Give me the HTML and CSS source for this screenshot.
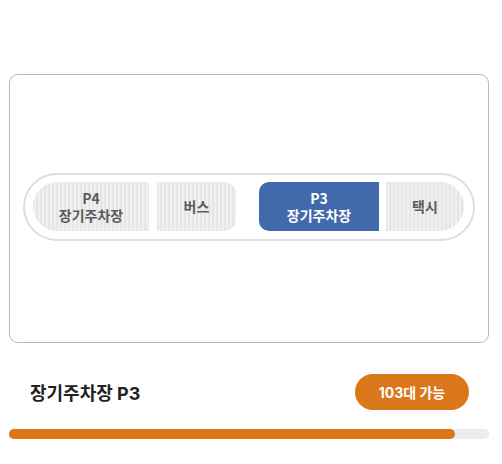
FILE: index.html
```html
<!DOCTYPE html>
<html lang="ko">
<head>
    <meta charset="UTF-8">
    <meta name="viewport" content="width=device-width, initial-scale=1.0">
    <title>주차장 현황</title>
    <link rel="stylesheet" href="styles.css">
</head>
<body>

    <div class="page">
        <div class="map-card">
            <div class="road">
                <div class="zone zone-p4"><span>P4</span><span>장기주차장</span></div>
                <div class="zone zone-bus"><span>버스</span></div>
                <div class="zone zone-p3 active"><span>P3</span><span>장기주차장</span></div>
                <div class="zone zone-taxi"><span>택시</span></div>
            </div>
        </div>

        <div class="status-row">
            <h2 class="status-title">장기주차장 P3</h2>
            <span class="status-badge">103대 가능</span>
        </div>

        <div class="progress">
            <div class="progress-fill" style="width: 93%"></div>
        </div>
    </div>

</body>
</html>
```

FILE: styles.css
```css
body {
    margin: 0;
    padding: 0;
    background-color: #fff;
    font-family: "Inter", "Noto Sans CJK KR", sans-serif;
}

.page {
    width: 480px;
    margin-left: 9px;
    padding-top: 74px;
}

.map-card {
    height: 269px;
    box-sizing: border-box;
    border: 1px solid #a9bccb;
    border-radius: 9px;
    display: flex;
    align-items: center;
    justify-content: center;
}

.road {
    width: 452px;
    height: 68px;
    box-sizing: border-box;
    border: 2px solid #dedede;
    border-radius: 34px;
    padding: 7px 9px 7px 8px;
    display: flex;
    margin-top: -3px;
}

.zone {
    height: 49px;
    display: flex;
    flex-direction: column;
    align-items: center;
    justify-content: center;
    text-align: center;
    font-family: "Noto Sans CJK KR", sans-serif;
    font-size: 14px;
    font-weight: 700;
    line-height: 17px;
    color: #5b5b5b;
    background-color: #ececec;
    background-image: repeating-linear-gradient(90deg, #e2e2e2 0 1px, #f0f0f0 1px 3px, #e8e8e8 3px 4px);
}

.zone span {
    display: block;
}

.zone-p4 {
    width: 116px;
    border-radius: 25px 0 0 25px;
}

.zone-bus {
    width: 79px;
    margin-left: 8px;
    border-radius: 0 12px 12px 0;
}

.zone-p3 {
    width: 120px;
    margin-left: 23px;
    border-radius: 10px 0 0 10px;
}

.zone-taxi {
    width: 78px;
    margin-left: 7px;
    border-radius: 0 25px 25px 0;
}

.zone.active {
    background: #4369ad;
    color: #fff;
}

.status-row {
    display: flex;
    justify-content: space-between;
    align-items: center;
    margin-top: 31px;
    padding: 0 20px 0 21px;
}

.status-title {
    margin: 0;
    font-size: 18px;
    font-weight: 700;
    color: #222;
}

.status-badge {
    width: 114px;
    height: 36px;
    border-radius: 18px;
    background-color: #d9771a;
    color: #fff;
    font-size: 14px;
    font-weight: 700;
    display: flex;
    align-items: center;
    justify-content: center;
}

.progress {
    margin-top: 19px;
    height: 10px;
    border-radius: 5px;
    background-color: #ececec;
}

.progress-fill {
    height: 100%;
    border-radius: 5px;
    background-color: #d9771a;
}
```
